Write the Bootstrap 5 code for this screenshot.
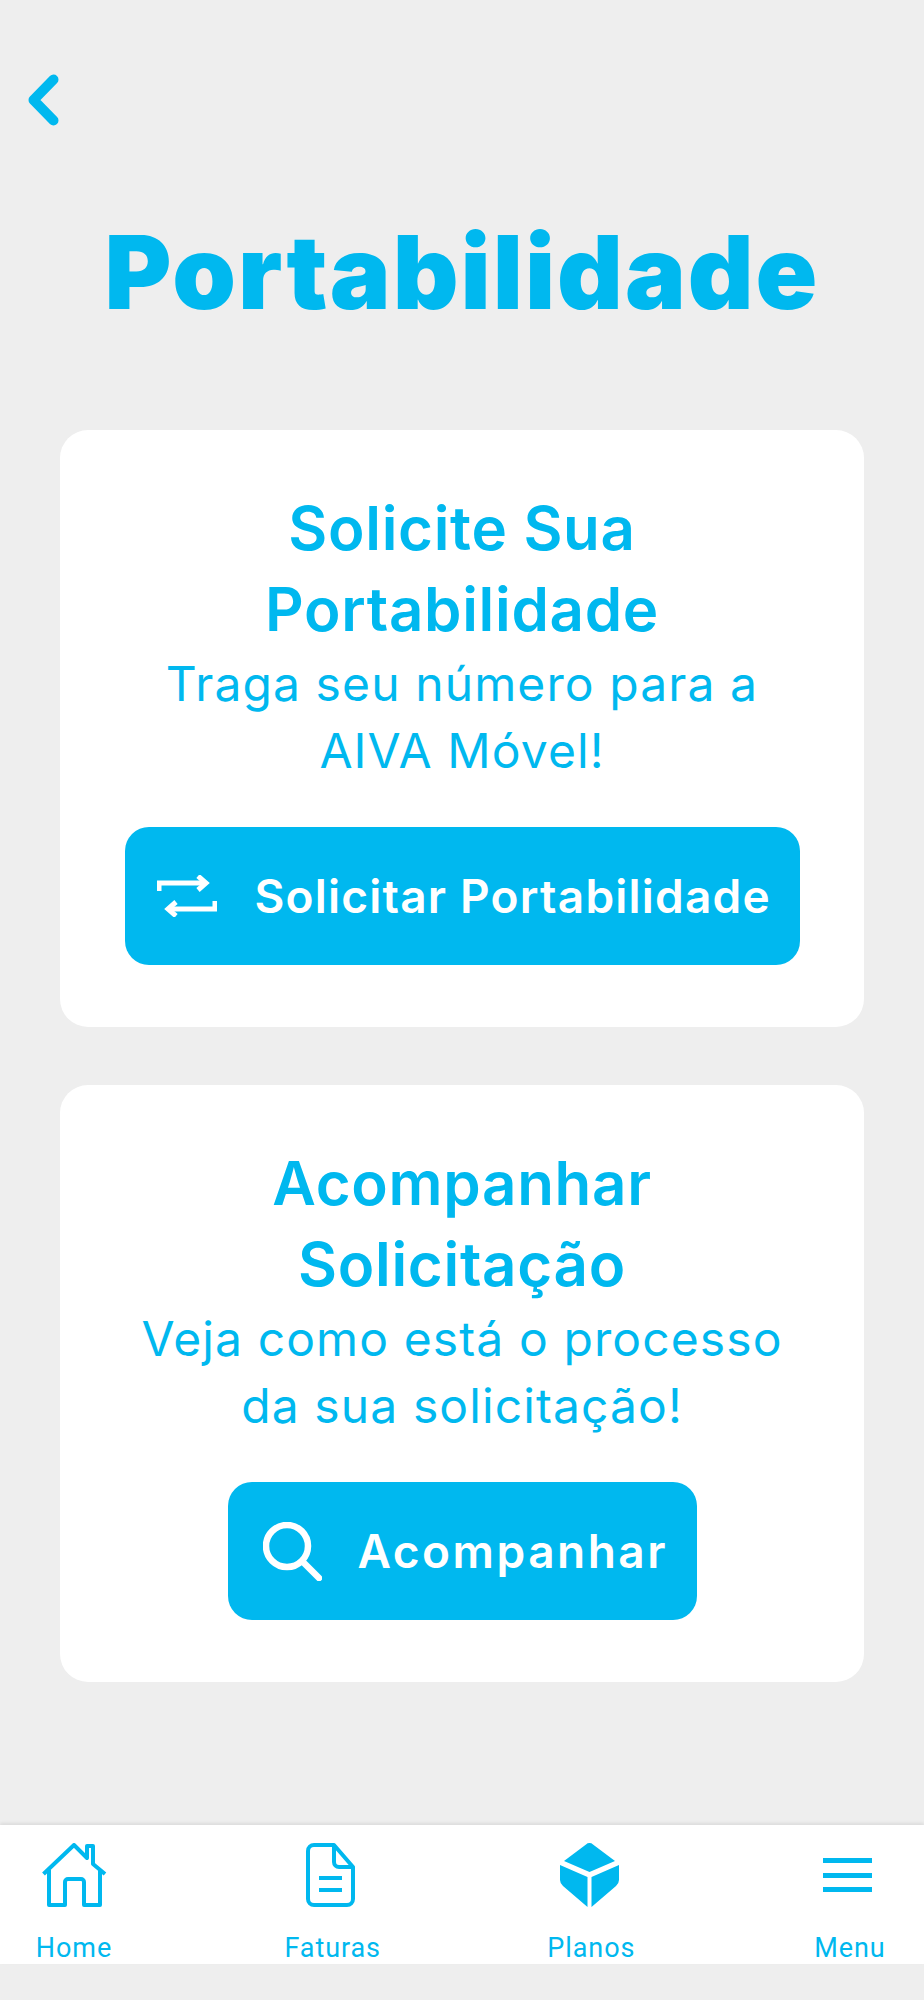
<!DOCTYPE html>
<html lang="pt-BR">
<head>
    <meta charset="UTF-8">
    <meta name="viewport" content="width=device-width, initial-scale=1.0">
    <title>Portabilidade</title>
    <link href="https://cdn.jsdelivr.net/npm/bootstrap@5.3.0/dist/css/bootstrap.min.css" rel="stylesheet">
    <style>
        body {
            background-color: #eeeeee;
            font-family: Inter, "Liberation Sans", sans-serif;
            color: #00b8ef;
        }
        .page-wrap {
            height: 2000px;
            overflow: hidden;
        }
        .back-link {
            flex: none;
            padding: 74px 0 0 28px;
            height: 126px;
            line-height: 0;
        }
        .page-title {
            flex: none;
            font-size: 102px;
            font-weight: 900;
            letter-spacing: 2px;
            line-height: 120px;
            margin: 86px 0 98px;
            color: #00b8ef;
        }
        .info-box {
            flex: none;
            height: 597px;
            margin: 0 60px 58px;
            padding-top: 58px;
            border-radius: 28px;
            background: #fff;
        }
        .info-title {
            font-size: 60px;
            font-weight: 600;
            letter-spacing: .7px;
            line-height: 81px;
            margin: 0;
            color: #00b8ef;
        }
        .info-text {
            font-size: 48px;
            letter-spacing: 1.1px;
            line-height: 67px;
            margin: 0 0 43px;
        }
        .action-btn {
            height: 138px;
            border-radius: 24px;
            background: #00b8ef;
            border: 0;
            color: #fff;
            font-size: 46px;
            font-weight: 600;
            letter-spacing: 1.2px;
        }
        .btn-long { width: 675px; padding-left: 32px; gap: 38px; }
        .btn-short { width: 469px; padding-left: 35px; gap: 36px; letter-spacing: 2.5px; }
        .bottom-bar {
            flex: none;
            height: 139px;
            margin-top: 85px;
            padding: 18px 24px 0;
            background: #fff;
            box-shadow: 0 -2px 3px rgba(0, 0, 0, .08);
        }
        .bar-item {
            width: 100px;
            font-family: Roboto, sans-serif;
            font-size: 27px;
            letter-spacing: .9px;
            line-height: 30px;
            text-align: center;
        }
        .bar-item svg { display: block; margin: 0 auto 26px; }
        .bar-item .icon-shift { transform: translateX(-2px); }
    </style>
</head>
<body>
    <div class="page-wrap d-flex flex-column">
        <div class="back-link">
            <svg width="31" height="52" viewBox="0 0 31 52"><path d="M25.500 5.500 5.500 26l20 20.500" fill="none" stroke="#00b8ef" stroke-width="10" stroke-linecap="round" stroke-linejoin="round"/></svg>
        </div>
        <h1 class="page-title text-center">Portabilidade</h1>

        <div class="info-box text-center">
            <h2 class="info-title">Solicite Sua<br>Portabilidade</h2>
            <p class="info-text">Traga seu número para a<br>AIVA Móvel!</p>
            <button type="button" class="btn action-btn btn-long d-inline-flex align-items-center">
                <svg width="60" height="42" viewBox="0 0 60 42" fill="none" stroke="#fff" stroke-width="5"><path d="M2 16V8h47"/><path d="M41 1l8 7-8 7"/><path d="M58 26v8H11"/><path d="M19 27l-8 7 8 7"/></svg>
                <span>Solicitar Portabilidade</span>
            </button>
        </div>

        <div class="info-box text-center">
            <h2 class="info-title">Acompanhar<br>Solicitação</h2>
            <p class="info-text">Veja como está o processo<br>da sua solicitação!</p>
            <button type="button" class="btn action-btn btn-short d-inline-flex align-items-center">
                <svg width="59" height="59" viewBox="0 0 59 59" fill="none" stroke="#fff" stroke-width="6.500" stroke-linecap="round"><circle cx="24" cy="24" r="21"/><path d="M40 40l16 16"/></svg>
                <span>Acompanhar</span>
            </button>
        </div>

        <nav class="bottom-bar d-flex justify-content-between">
            <div class="bar-item">
                <svg width="65" height="64" viewBox="0 0 65 64" fill="none" stroke="#00b8ef" stroke-width="4" stroke-linejoin="round"><path d="M1.500 31 32 2l13 13V3h6v18l12 10"/><path d="M7 27v35h16V39a3 3 0 0 1 3-3h13a3 3 0 0 1 3 3v23h16V27"/></svg>
                Home
            </div>
            <div class="bar-item">
                <svg class="icon-shift" width="49" height="64" viewBox="0 0 49 64" fill="none" stroke="#00b8ef" stroke-width="4" stroke-linejoin="round"><path d="M8 2h20l19 22v32a6 6 0 0 1-6 6H8a6 6 0 0 1-6-6V8a6 6 0 0 1 6-6z"/><path d="M28 2v17a5 5 0 0 0 5 5h14"/><path d="M13 35h23M13 47h23" stroke-width="4"/></svg>
                Faturas
            </div>
            <div class="bar-item">
                <svg class="icon-shift" width="59" height="64" viewBox="0 0 59 64" fill="#00b8ef"><path d="M26 1.500a5 5 0 0 1 7 0L55 18 29.500 29 4 18z"/><path d="M0 22l27.500 12v30L3 43a8 8 0 0 1-3-6z"/><path d="M59 22L31.500 34v30L56 43a8 8 0 0 0 3-6z"/></svg>
                Planos
            </div>
            <div class="bar-item">
                <svg class="icon-shift" width="49" height="64" viewBox="0 0 49 64" fill="#00b8ef"><rect y="15" width="49" height="5"/><rect y="30" width="49" height="5"/><rect y="44" width="49" height="5"/></svg>
                Menu
            </div>
        </nav>
    </div>
    <script src="https://cdn.jsdelivr.net/npm/bootstrap@5.3.0/dist/js/bootstrap.bundle.min.js"></script>
</body>
</html>
